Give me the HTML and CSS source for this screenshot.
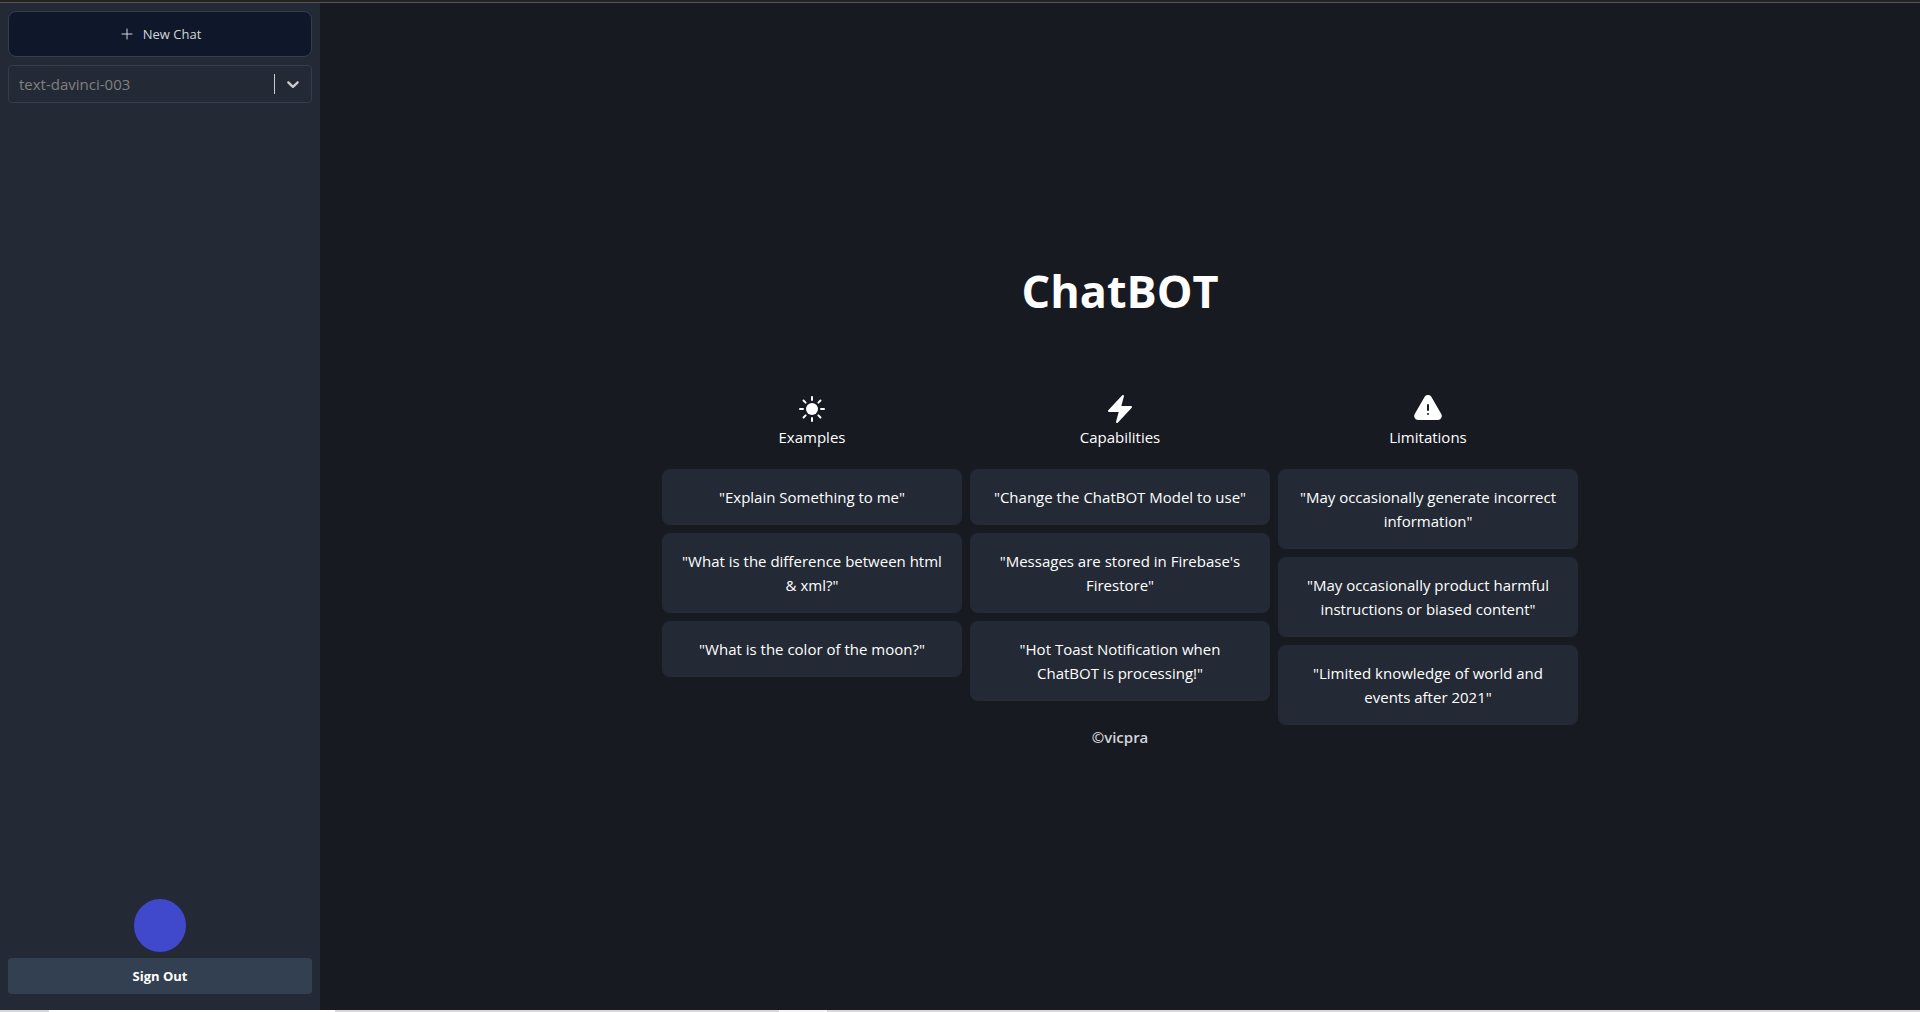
FILE: index.html
```html
<!DOCTYPE html>
<html lang="en">
<head>
<meta charset="utf-8">
<meta name="viewport" content="width=device-width, initial-scale=1">
<title>ChatBOT</title>
<link rel="stylesheet" href="styles.css">
</head>
<body>
<div class="window-edge"></div>
<div class="app">
  <aside class="sidebar">
    <div class="sidebar-top">
      <button class="new-chat" type="button">
        <svg class="plus" viewBox="0 0 24 24" fill="none" stroke="currentColor" stroke-width="1.5" stroke-linecap="round" aria-hidden="true"><path d="M12 4.5v15m7.5-7.5h-15"/></svg>
        <span>New Chat</span>
      </button>
      <div class="model">
        <select class="model-select" aria-label="Model">
          <option>text-davinci-003</option>
        </select>
        <svg class="chevron" viewBox="0 0 20 20" fill="currentColor" aria-hidden="true"><path d="M4.516 7.548c0.436-0.446 1.043-0.481 1.576 0l3.908 3.747 3.908-3.747c0.533-0.481 1.141-0.446 1.574 0 0.436 0.445 0.408 1.197 0 1.615-0.406 0.418-4.695 4.502-4.695 4.502-0.217 0.223-0.502 0.335-0.787 0.335s-0.57-0.112-0.789-0.335c0 0-4.287-4.084-4.695-4.502s-0.436-1.17 0-1.615z"/></svg>
      </div>
    </div>
    <div class="sidebar-bottom">
      <div class="avatar"></div>
      <button class="sign-out" type="button">Sign Out</button>
    </div>
  </aside>
  <main class="main">
    <h1 class="title">ChatBOT</h1>
    <div class="columns">
      <section class="column">
        <header class="column-head">
          <svg class="icon" viewBox="0 0 24 24" fill="currentColor" aria-hidden="true"><circle cx="12" cy="12" r="4.5"/><path fill="none" stroke="currentColor" stroke-width="1.5" stroke-linecap="round" d="M12 3v2.25M18.364 5.636l-1.591 1.591M21 12h-2.25M18.364 18.364l-1.591-1.591M12 18.75V21M7.227 16.773l-1.591 1.591M5.25 12H3M7.227 7.227 5.636 5.636"/></svg>
          <h2 class="column-title">Examples</h2>
        </header>
        <p class="card">"Explain Something to me"</p>
        <p class="card">"What is the difference between html &amp; xml?"</p>
        <p class="card">"What is the color of the moon?"</p>
      </section>
      <section class="column">
        <header class="column-head">
          <svg class="icon" viewBox="0 0 24 24" fill="currentColor" stroke="currentColor" stroke-width="1.5" stroke-linejoin="round" aria-hidden="true"><path d="m3.75 13.5 10.5-11.25L12 10.5h8.25L9.75 21.75 12 13.5H3.75Z"/></svg>
          <h2 class="column-title">Capabilities</h2>
        </header>
        <p class="card">"Change the ChatBOT Model to use"</p>
        <p class="card">"Messages are stored in Firebase's Firestore"</p>
        <p class="card">"Hot Toast Notification when ChatBOT is processing!"</p>
      </section>
      <section class="column">
        <header class="column-head">
          <svg class="icon" viewBox="0 0 24 24" fill="currentColor" aria-hidden="true"><path fill-rule="evenodd" d="M9.401 3.003c1.155-2 4.043-2 5.197 0l7.355 12.748c1.154 2-.29 4.5-2.599 4.5H4.645c-2.309 0-3.752-2.5-2.598-4.5L9.4 3.003ZM12 8.25a.75.75 0 0 1 .75.75v3.75a.75.75 0 0 1-1.5 0V9a.75.75 0 0 1 .75-.75Zm0 8.25a.75.75 0 1 0 0-1.5.75.75 0 0 0 0 1.5Z"/></svg>
          <h2 class="column-title">Limitations</h2>
        </header>
        <p class="card">"May occasionally generate incorrect information"</p>
        <p class="card">"May occasionally product harmful instructions or biased content"</p>
        <p class="card">"Limited knowledge of world and events after 2021"</p>
      </section>
    </div>
    <p class="credit">©vicpra</p>
  </main>
</div>
<div class="taskbar-edge"></div>
</body>
</html>
```
FILE: styles.css
```css
* {
  box-sizing: border-box;
  margin: 0;
}

body {
  display: flex;
  flex-direction: column;
  min-height: 100vh;
  background: #181a22;
  color: #fff;
  font: 15px/24px "Open Sans", "Noto Sans", sans-serif;
}

button,
select {
  font: inherit;
  color: inherit;
}

.window-edge {
  height: 3px;
  background: #232323;
  border-bottom: 1px solid #555;
}

.taskbar-edge {
  height: 2px;
  background: linear-gradient(90deg, #d8d8da 49px, #fff 49px 335px, #d8d8da 335px 779px, #f4f4f6 779px 827px, #d8d8da 827px);
}

.app {
  display: flex;
  flex: 1;
}

.sidebar {
  display: flex;
  flex-direction: column;
  justify-content: space-between;
  width: 320px;
  padding: 8px 8px 16px;
  background: #242a35;
}

.sidebar-top {
  display: flex;
  flex-direction: column;
  gap: 8px;
}

.new-chat {
  display: flex;
  align-items: center;
  justify-content: center;
  gap: 8px;
  height: 46px;
  border: 1px solid #343c4e;
  border-radius: 8px;
  background: #0f172a;
  color: #d1d5db;
  font-size: 13px;
}

.plus {
  width: 16px;
  height: 16px;
}

.model {
  position: relative;
  height: 38px;
}

.model-select {
  appearance: none;
  width: 100%;
  height: 100%;
  padding: 0 10px;
  border: 1px solid #343c4e;
  border-radius: 4px;
  background: #242a35;
  color: #808080;
}

.model::after {
  content: "";
  position: absolute;
  top: 9px;
  right: 37px;
  width: 1px;
  height: 20px;
  background: #ccc;
  pointer-events: none;
}

.chevron {
  position: absolute;
  top: 9px;
  right: 9px;
  width: 20px;
  height: 20px;
  color: #ccc;
  pointer-events: none;
}

.sidebar-bottom {
  display: flex;
  flex-direction: column;
  align-items: center;
  gap: 6px;
}

.avatar {
  width: 52px;
  height: 53px;
  border-radius: 50%;
  background: #4048cc;
}

.sign-out {
  width: 100%;
  height: 36px;
  border: 0;
  border-radius: 4px;
  background: #334052;
  color: #fff;
  font-size: 13px;
  font-weight: 700;
}

.main {
  display: flex;
  flex: 1;
  flex-direction: column;
  align-items: center;
  justify-content: center;
  padding: 0 8px;
}

.title {
  margin-bottom: 76px;
  font-size: 45px;
  line-height: 52px;
}

.columns {
  display: flex;
  gap: 8px;
  text-align: center;
}

.column {
  display: flex;
  flex-direction: column;
  gap: 8px;
  width: 300px;
}

.column-head {
  display: flex;
  flex-direction: column;
  align-items: center;
  margin-bottom: 12px;
}

.icon {
  width: 32px;
  height: 32px;
}

.column-title {
  font-size: 15px;
  font-weight: 400;
}

.card {
  padding: 16px 18px;
  border-radius: 8px;
  background: #242a35;
}

.credit {
  color: #d1d5db;
  font-weight: 600;
}
```
